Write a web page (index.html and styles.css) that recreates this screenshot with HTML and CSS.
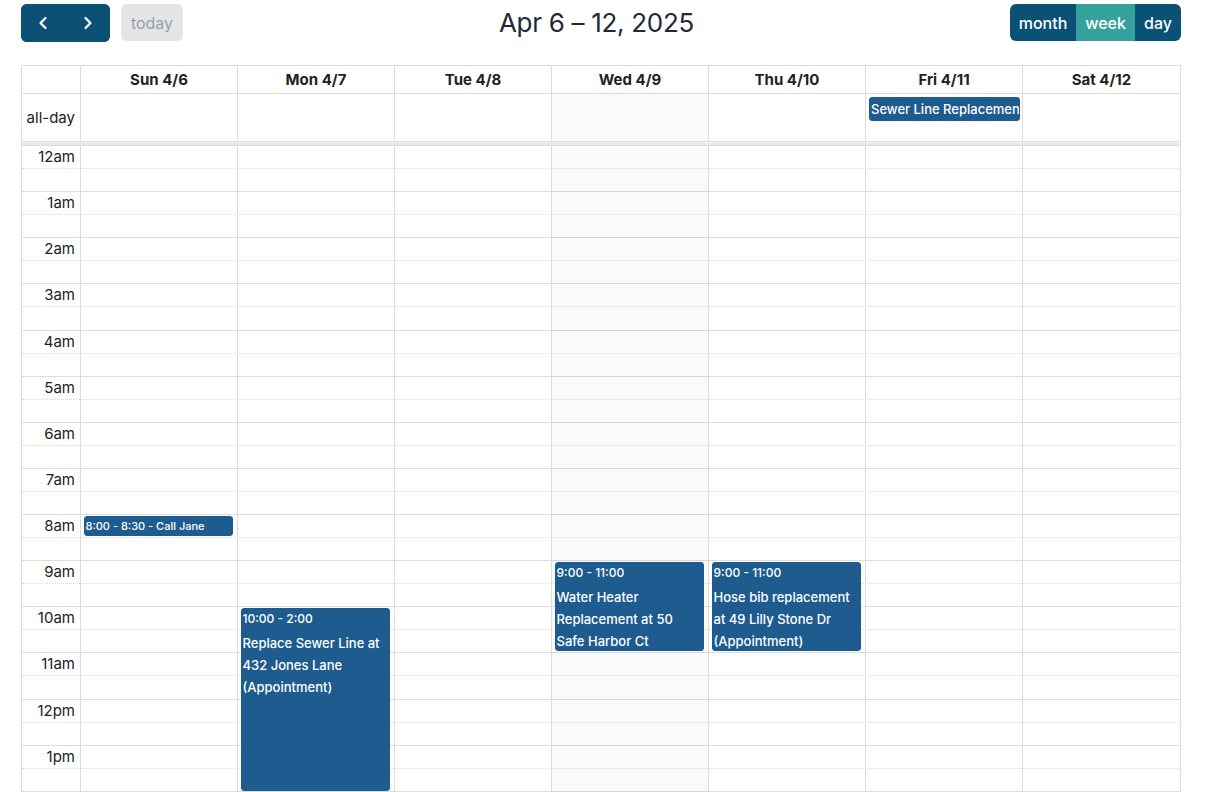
FILE: index.html
```html
<!DOCTYPE html>
<html>
<head>
<meta charset="utf-8">
<link rel="stylesheet" href="styles.css">
</head>
<body>
<div class="cal">
  <div class="toolbar">
    <div class="tb-left">
      <div class="btn-group nav">
        <button class="btn nav-btn" aria-label="prev"><svg width="10" height="14" viewBox="0 0 10 14"><polyline points="7.5,2 2.5,7 7.5,12" fill="none" stroke="#fff" stroke-width="2.2" stroke-linecap="round" stroke-linejoin="round"/></svg></button>
        <button class="btn nav-btn" aria-label="next"><svg width="10" height="14" viewBox="0 0 10 14"><polyline points="2.5,2 7.5,7 2.5,12" fill="none" stroke="#fff" stroke-width="2.2" stroke-linecap="round" stroke-linejoin="round"/></svg></button>
      </div>
      <button class="btn today">today</button>
    </div>
    <h2 class="title">Apr 6 – 12, 2025</h2>
    <div class="btn-group views">
      <button class="btn view v-month">month</button>
      <button class="btn view v-week active">week</button>
      <button class="btn view v-day">day</button>
    </div>
  </div>

  <div class="grid">
    <div class="row head">
      <div class="cell axis"></div>
      <div class="cell day">Sun 4/6</div>
      <div class="cell day">Mon 4/7</div>
      <div class="cell day">Tue 4/8</div>
      <div class="cell day">Wed 4/9</div>
      <div class="cell day">Thu 4/10</div>
      <div class="cell day">Fri 4/11</div>
      <div class="cell day">Sat 4/12</div>
    </div>
    <div class="row allday">
      <div class="cell axis"><span>all-day</span></div>
      <div class="cell day"></div>
      <div class="cell day"></div>
      <div class="cell day"></div>
      <div class="cell day today-col"></div>
      <div class="cell day"></div>
      <div class="cell day"><div class="ad-event">Sewer Line Replacement</div></div>
      <div class="cell day"></div>
    </div>
    <div class="divider"></div>
    <div class="tg-body">
      <div class="slots">
        <div class="slot"><span class="lbl">12am</span></div><div class="slot hour-end"></div>
        <div class="slot"><span class="lbl">1am</span></div><div class="slot hour-end"></div>
        <div class="slot"><span class="lbl">2am</span></div><div class="slot hour-end"></div>
        <div class="slot"><span class="lbl">3am</span></div><div class="slot hour-end"></div>
        <div class="slot"><span class="lbl">4am</span></div><div class="slot hour-end"></div>
        <div class="slot"><span class="lbl">5am</span></div><div class="slot hour-end"></div>
        <div class="slot"><span class="lbl">6am</span></div><div class="slot hour-end"></div>
        <div class="slot"><span class="lbl">7am</span></div><div class="slot hour-end"></div>
        <div class="slot"><span class="lbl">8am</span></div><div class="slot hour-end"></div>
        <div class="slot"><span class="lbl">9am</span></div><div class="slot hour-end"></div>
        <div class="slot"><span class="lbl">10am</span></div><div class="slot hour-end"></div>
        <div class="slot"><span class="lbl">11am</span></div><div class="slot hour-end"></div>
        <div class="slot"><span class="lbl">12pm</span></div><div class="slot hour-end"></div>
        <div class="slot"><span class="lbl">1pm</span></div><div class="slot hour-end last"></div>
      </div>
      <div class="cols">
        <div class="col axis-col"></div>
        <div class="col">
          <div class="event short" style="top:369.9px;height:20.1px">8:00 - 8:30 - Call Jane</div>
        </div>
        <div class="col">
          <div class="event" style="top:462.2px;height:182.4px">
            <div class="ev-time">10:00 - 2:00</div>
            <div class="ev-title">Replace Sewer Line at 432 Jones Lane (Appointment)</div>
          </div>
        </div>
        <div class="col"></div>
        <div class="col today-col">
          <div class="event" style="top:416.1px;height:89.3px">
            <div class="ev-time">9:00 - 11:00</div>
            <div class="ev-title">Water Heater Replacement at 50 Safe Harbor Ct</div>
          </div>
        </div>
        <div class="col">
          <div class="event" style="top:416.1px;height:89.3px">
            <div class="ev-time">9:00 - 11:00</div>
            <div class="ev-title">Hose bib replacement at 49 Lilly Stone Dr (Appointment)</div>
          </div>
        </div>
        <div class="col"></div>
        <div class="col"></div>
      </div>
    </div>
  </div>
</div>
</body>
</html>
```

FILE: styles.css
```css
* { box-sizing: border-box; }
html, body { margin: 0; padding: 0; background: #fff; overflow: hidden; }
body {
  font-family: Inter, "Liberation Sans", sans-serif;
  color: #222;
  height: 792px;
}
.cal {
  width: 1160px;
  margin-left: 21px;
  padding-top: 4px;
}
.toolbar {
  display: flex;
  justify-content: space-between;
  align-items: flex-start;
  height: 38px;
  margin-bottom: 23px;
}
.tb-left { display: flex; gap: 11px; }
.btn {
  border: 0;
  margin: 0;
  padding: 0;
  font-family: inherit;
  font-size: 16px;
  display: flex;
  align-items: center;
  justify-content: center;
  cursor: pointer;
}
.btn-group { display: flex; border-radius: 6px; overflow: hidden; }
.nav { height: 38px; background: #0b5176; }
.nav-btn { width: 44.5px; height: 38px; background: #0b5176; }
.today {
  width: 62px; height: 37px;
  border-radius: 6px;
  background: #e3e5e8;
  color: #9a9fa6;
}
.title {
  margin: 0;
  font-size: 26px;
  font-weight: 400;
  line-height: 38px;
  color: #1f2937;
  letter-spacing: -0.3px;
}
.views { height: 37px; }
.view {
  height: 37px;
  background: #0b5176;
  color: #fff;
  font-weight: 500;
}
.view.active { background: #35a19d; }
.v-month { width: 66px; }
.v-week { width: 59px; }
.v-day { width: 46px; }

.grid {
  border: 1px solid #ddd;
  border-bottom: 0;
}
.row {
  display: grid;
  grid-template-columns: 58px repeat(6, 157px) minmax(0, 1fr);
  border-bottom: 1px solid #ddd;
}
.cell { min-width: 0; }
.cell.day { border-left: 1px solid #ddd; }
.head { height: 28px; }
.head .cell {
  font-size: 15px;
  font-weight: 700;
  line-height: 27px;
  text-align: center;
  color: #222;
}
.allday { height: 48px; }
.allday .axis {
  display: flex;
  align-items: center;
  justify-content: flex-end;
  padding-right: 5px;
  font-size: 15px;
}
.today-col { background: rgba(0,0,0,0.02); }
.ad-event {
  margin: 3px 2px 0 3px;
  height: 24px;
  background: #1e5b8f;
  border: 1px solid #1e5b8f;
  border-radius: 3px;
  color: #fff;
  font-size: 13px;
  font-weight: 500;
  line-height: 22px;
  padding-left: 1px;
  white-space: nowrap;
  overflow: hidden;
}
.divider {
  height: 4px;
  background: #e9e9e9;
  border-top: 1px solid #f3f3f3;
  border-bottom: 1px solid #ddd;
}
.tg-body {
  display: grid;
  height: 646px;
  overflow: hidden;
}
.slots, .cols { grid-area: 1 / 1; }
.slot {
  height: 23.077px;
  border-bottom: 1px dotted #ddd;
  display: flex;
}
.slot.hour-end { border-bottom-style: solid; }
.lbl {
  width: 58px;
  text-align: right;
  padding-right: 5px;
  font-size: 15px;
  line-height: 22px;
}
.cols {
  display: grid;
  grid-template-columns: 58px repeat(6, 157px) minmax(0, 1fr);
}
.col { position: relative; min-width: 0; }
.col:not(.axis-col) { border-left: 1px solid #ddd; }
.event {
  position: absolute;
  left: 2.5px;
  right: 4px;
  background: #1e5b8f;
  border: 1px solid #1e5b8f;
  border-radius: 3px;
  color: #fff;
  padding-left: 1px;
  overflow: hidden;
}
.event.short {
  font-size: 11px;
  font-weight: 500;
  line-height: 18px;
  white-space: nowrap;
}
.ev-time {
  font-size: 12px;
  font-weight: 500;
  line-height: 20px;
  margin-bottom: 3px;
}
.ev-title {
  font-size: 13px;
  font-weight: 500;
  line-height: 22px;
}
```
